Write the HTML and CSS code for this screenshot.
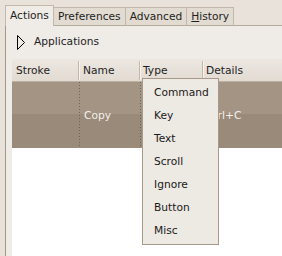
FILE: index.html
```html
<!DOCTYPE html>
<html>
<head>
<meta charset="utf-8">
<link rel="stylesheet" href="styles.css">
</head>
<body>
<div class="window">
  <div class="tabs">
    <div class="tab active">Actions</div>
    <div class="tab">Preferences</div>
    <div class="tab">Advanced</div>
    <div class="tab"><span class="mn">H</span>istory</div>
    <div class="tab-fill"></div>
  </div>
  <div class="panel">
    <div class="expander">
      <svg class="arrow" width="9" height="15" viewBox="0 0 9 15"><polygon points="0.5,0.5 7.5,7.5 0.5,14.5" fill="none" stroke="#000" stroke-width="1"/></svg>
      <span>Applications</span>
    </div>
    <div class="table">
      <div class="thead">
        <div class="th c1">Stroke</div><div class="sep"></div>
        <div class="th c2">Name</div><div class="sep"></div>
        <div class="th c3">Type</div><div class="sep"></div>
        <div class="th c4">Details</div>
      </div>
      <div class="row selected">
        <div class="td r1"></div><div class="dots"></div>
        <div class="td r2">Copy</div><div class="dots"></div>
        <div class="td r3"></div>
        <div class="td r4">Ctrl+C</div>
      </div>
    </div>
  </div>
</div>
<div class="menu">
  <div class="item">Command</div>
  <div class="item">Key</div>
  <div class="item">Text</div>
  <div class="item">Scroll</div>
  <div class="item">Ignore</div>
  <div class="item">Button</div>
  <div class="item">Misc</div>
</div>
</body>
</html>
```
FILE: styles.css
```css
html, body {
  margin: 0;
  padding: 0;
}
body {
  width: 282px;
  height: 256px;
  overflow: hidden;
  background: #e8e2da;
  font-family: "DejaVu Sans", sans-serif;
  font-size: 10.67px;
  color: #1e1e1e;
  position: relative;
}
.window {
  padding: 5px 0 0 5px;
  height: 251px;
  display: flex;
  flex-direction: column;
}
.tabs {
  display: flex;
  align-items: flex-end;
  height: 21px;
}
.tab {
  box-sizing: border-box;
  height: 19px;
  padding: 0 4px;
  background: #e2dbd1;
  border: 1px solid #c3b8ab;
  border-bottom-color: #b4a99b;
  border-left: none;
  line-height: 17px;
  white-space: nowrap;
}
.tab.active {
  height: 21px;
  background: #efebe7;
  border-left: 1px solid #c3b8ab;
  border-bottom: none;
  line-height: 20px;
  padding: 0 4px 0 4px;
}
.mn {
  text-decoration: underline;
}
.tab-fill {
  flex: 1;
  height: 1px;
  background: #b4a99b;
}
.panel {
  flex: 1;
  background: #efebe7;
  border-left: 1px solid #a59788;
  padding: 4px 0 0 6px;
  display: flex;
  flex-direction: column;
}
.expander {
  height: 23px;
  display: flex;
  align-items: center;
  margin-bottom: 6px;
}
.arrow {
  display: block;
  margin: 1px 8px 0 5px;
}
.table {
  flex: 1;
  background: #ffffff;
}
.thead {
  display: flex;
  align-items: center;
  height: 22px;
  border-bottom: 1px solid #bdb1a3;
  background: linear-gradient(#ece7e1, #e2dbd2);
}
.th {
  box-sizing: border-box;
  padding-left: 4px;
  white-space: nowrap;
}
.c1 { width: 66px; }
.c2 { width: 60px; padding-left: 4px; }
.c3 { width: 62px; padding-left: 3px; }
.c4 { flex: 1; padding-left: 3px; }
.sep {
  width: 1px;
  height: 19px;
  background: #c2b6a8;
  box-shadow: 1px 0 0 #f7f4f0;
}
.row {
  display: flex;
  align-items: center;
  height: 66px;
}
.selected {
  background: linear-gradient(#a49484 0, #a49484 48%, #9a8a7a 48%, #9a8a7a 100%);
  color: #f4f0eb;
}
.td {
  box-sizing: border-box;
  white-space: nowrap;
}
.r1 { width: 67px; }
.r2 { width: 60px; padding-left: 4px; }
.r3 { width: 62px; }
.r4 { flex: 1; padding-left: 3px; }
.dots {
  width: 1px;
  align-self: stretch;
  background: repeating-linear-gradient(to bottom, #6f6356 0, #6f6356 1px, transparent 1px, transparent 3px);
}
.menu {
  position: absolute;
  left: 142px;
  top: 78px;
  width: 75px;
  padding: 2px 0;
  background: #ede9e3;
  border: 1px solid #a8998a;
}
.item {
  height: 23px;
  line-height: 23px;
  padding-left: 11px;
  color: #1a1a1a;
}
```
